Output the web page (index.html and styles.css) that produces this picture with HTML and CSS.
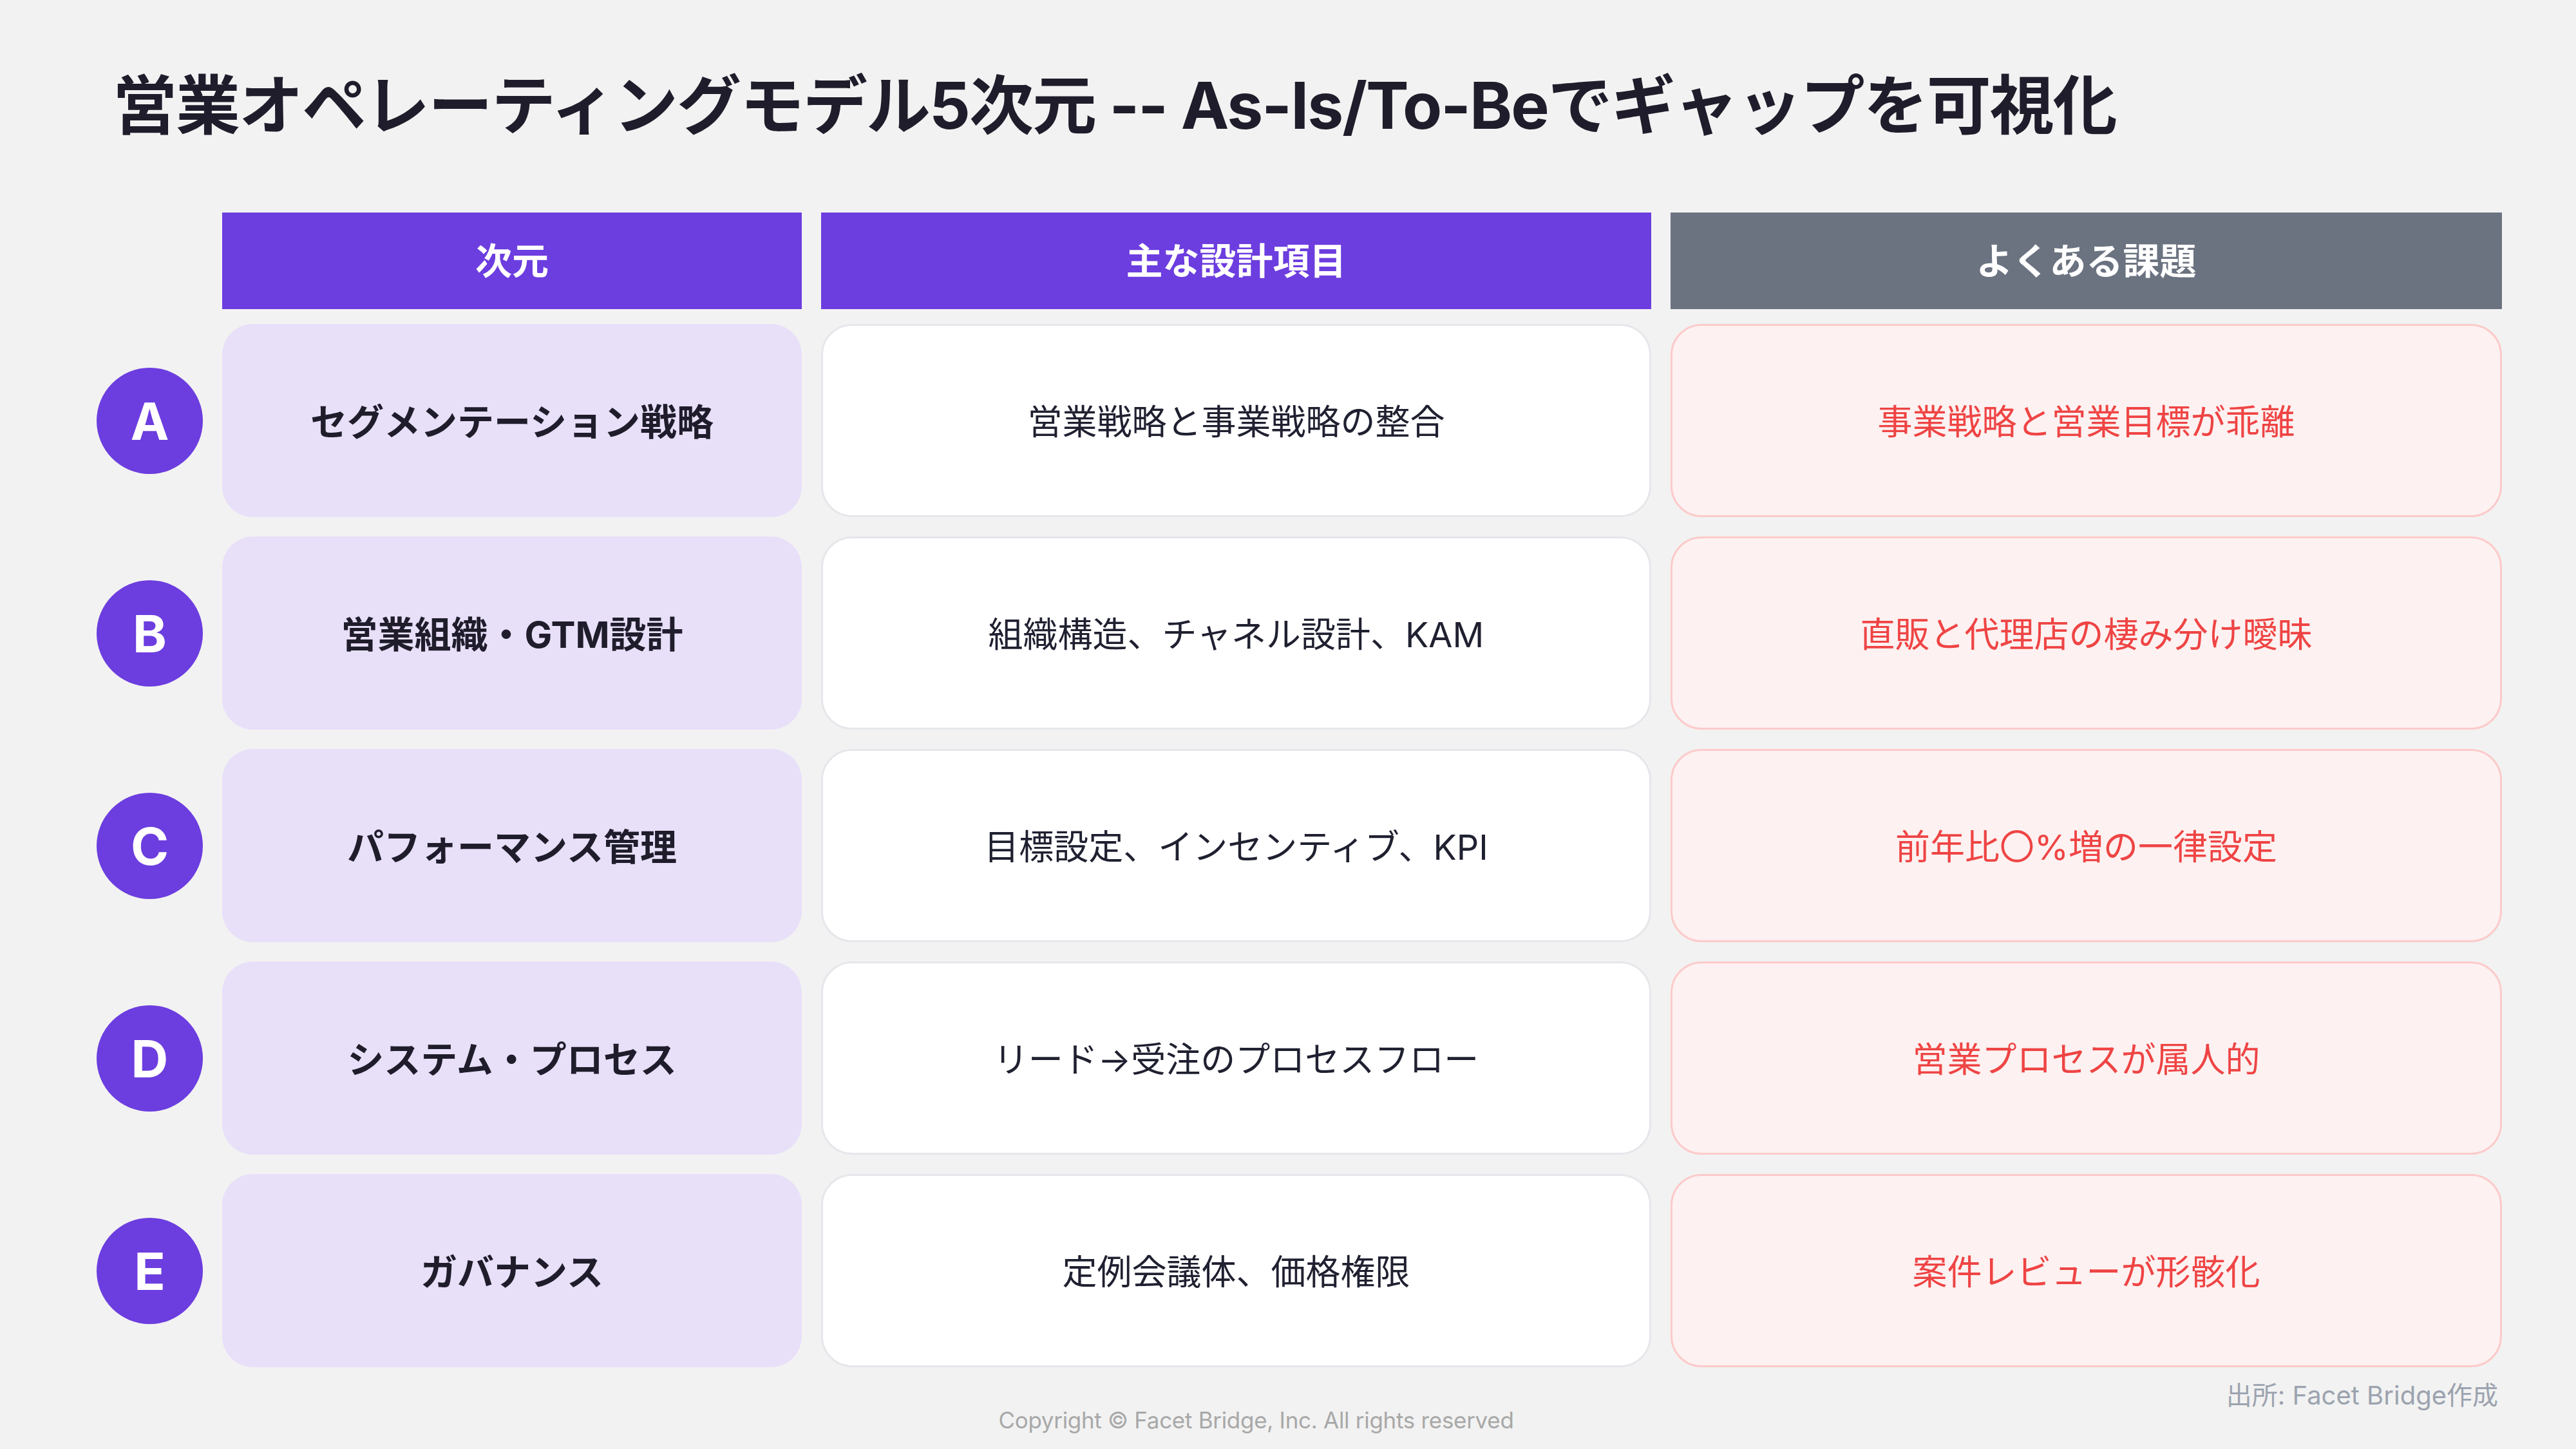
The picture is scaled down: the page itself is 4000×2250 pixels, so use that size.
FILE: index.html
```html
<!DOCTYPE html>
<html lang="ja">
<head>
<meta charset="utf-8">
<title>営業オペレーティングモデル5次元</title>
<link rel="stylesheet" href="styles.css">
</head>
<body>
<div class="page">
  <h1 class="title">営業オペレーティングモデル5次元 -- As-Is/To-Beでギャップを可視化</h1>

  <div class="grid head">
    <div class="spacer"></div>
    <div class="hcell purple">次元</div>
    <div class="hcell purple">主な設計項目</div>
    <div class="hcell gray">よくある課題</div>
  </div>

  <div class="grid rows">
    <div class="badge">A</div>
    <div class="cell dim">セグメンテーション戦略</div>
    <div class="cell item">営業戦略と事業戦略の整合</div>
    <div class="cell issue">事業戦略と営業目標が乖離</div>

    <div class="badge">B</div>
    <div class="cell dim">営業組織・GTM設計</div>
    <div class="cell item">組織構造、チャネル設計、KAM</div>
    <div class="cell issue">直販と代理店の棲み分け曖昧</div>

    <div class="badge">C</div>
    <div class="cell dim">パフォーマンス管理</div>
    <div class="cell item">目標設定、インセンティブ、KPI</div>
    <div class="cell issue">前年比〇%増の一律設定</div>

    <div class="badge">D</div>
    <div class="cell dim">システム・プロセス</div>
    <div class="cell item">リード→受注のプロセスフロー</div>
    <div class="cell issue">営業プロセスが属人的</div>

    <div class="badge">E</div>
    <div class="cell dim">ガバナンス</div>
    <div class="cell item">定例会議体、価格権限</div>
    <div class="cell issue">案件レビューが形骸化</div>
  </div>

  <div class="footer">
    <div class="source">出所: Facet Bridge作成</div>
    <div class="copyright">Copyright © Facet Bridge, Inc. All rights reserved</div>
  </div>
</div>
</body>
</html>
```
FILE: styles.css
```css
* { box-sizing: border-box; }

html, body {
  margin: 0;
  padding: 0;
  background: #f2f2f2;
}

body {
  font-family: Inter, "Noto Sans CJK JP", sans-serif;
  color: #1f1d2b;
}

.page {
  width: 4000px;
  height: 2250px;
  padding: 104px 115px 0 150px;
  overflow: hidden;
}

.title {
  margin: 0 0 0 25px;
  font-size: 100px;
  line-height: 120px;
  font-weight: 700;
  color: #1f1d2b;
  letter-spacing: -2px;
  white-space: nowrap;
}

.grid {
  display: grid;
  grid-template-columns: 165px 900px 1289px 1291px;
  column-gap: 30px;
}

.head {
  margin-top: 106px;
  height: 150px;
}

.hcell {
  display: flex;
  align-items: center;
  justify-content: center;
  padding-bottom: 8px;
  color: #ffffff;
  font-size: 57px;
  font-weight: 700;
}

.purple { background: #6c3ddf; }
.gray { background: #6b7280; }

.rows {
  margin-top: 23px;
  grid-auto-rows: 300px;
  row-gap: 30px;
}

.badge {
  align-self: center;
  width: 165px;
  height: 165px;
  border-radius: 50%;
  background: #6c3ddf;
  color: #ffffff;
  font-size: 80px;
  font-weight: 700;
  display: flex;
  align-items: center;
  justify-content: center;
}

.cell {
  display: flex;
  align-items: center;
  justify-content: center;
  padding-bottom: 4px;
  border-radius: 48px;
  font-size: 54px;
}

.dim {
  background: #e8dff9;
  font-size: 57px;
  font-weight: 700;
  color: #1f1d2b;
}

.item {
  background: #ffffff;
  border: 3px solid #e5e7eb;
  color: #1f2030;
}

.issue {
  background: #fdf1f1;
  border: 3px solid #fdcaca;
  color: #ef4444;
}

.footer {
  display: flex;
  flex-direction: column;
}

.source {
  margin-top: 20px;
  text-align: right;
  padding-right: 6px;
  font-size: 40px;
  line-height: 48px;
  color: #9ca3af;
}

.copyright {
  margin-top: -8px;
  padding-right: 134px;
  text-align: center;
  font-size: 35px;
  line-height: 44px;
  letter-spacing: -0.3px;
  color: #a8a8a8;
}
```
